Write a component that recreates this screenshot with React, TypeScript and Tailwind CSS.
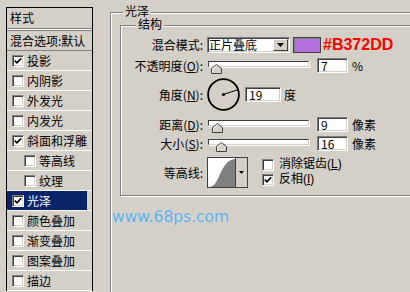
import React from 'react';

const sunken =
  'border border-[#808080] border-r-white border-b-white shadow-[inset_1px_1px_0_#404040,inset_-1px_-1px_0_#D4D0C8]';
const etched = 'border border-[#808080] shadow-[inset_1px_1px_0_#fff,1px_1px_0_#fff]';
const tight = "font-['Liberation_Sans','Noto_Sans_CJK_SC',sans-serif]";

function Check({ checked }: { checked?: boolean }) {
  return (
    <span className={`inline-flex w-[12px] h-[12px] shrink-0 items-center justify-center bg-white ${sunken}`}>
      {checked && (
        <svg width="8" height="8" viewBox="0 0 8 8">
          <polyline points="0.8,3.6 3,5.8 7.2,1.2" fill="none" stroke="#000" strokeWidth="1.7" />
        </svg>
      )}
    </span>
  );
}

function Key({ k }: { k: string }) {
  return (
    <>
      (<span className="underline underline-offset-[1px]">{k}</span>):
    </>
  );
}

function Slider({ pos }: { pos: number }) {
  return (
    <div className="relative ml-[5px] w-[101px] h-[15px]">
      <div className="mt-[3px] h-[6px] bg-white border border-[#404040] border-r-[#D4D0C8] border-b-[#D4D0C8] shadow-[1px_1px_0_#fff]" />
      <svg className="absolute top-[6px]" style={{ left: pos }} width="11" height="10" viewBox="0 0 11 10">
        <path d="M0.5 9.5 V4.5 L5.5 0.5 L10.5 4.5 V9.5 Z" fill="#D4D0C8" stroke="#404040" />
        <path d="M1.5 8.5 V5 L5.5 1.8" fill="none" stroke="#fff" />
      </svg>
    </div>
  );
}

function NumBox({ value, w = 'w-[31px]', ml = 'ml-[8px]' }: { value: string; w?: string; ml?: string }) {
  return (
    <div className={`${ml} ${w} h-[15px] bg-white pl-[3px] leading-[13px] ${sunken}`}>{value}</div>
  );
}

const items = [
  { t: '投影', c: true },
  { t: '内阴影' },
  { t: '外发光' },
  { t: '内发光' },
  { t: '斜面和浮雕', c: true },
  { t: '等高线', indent: true },
  { t: '纹理', indent: true },
  { t: '光泽', c: true, sel: true },
  { t: '颜色叠加' },
  { t: '渐变叠加' },
  { t: '图案叠加' },
  { t: '描边' },
];

export default function App() {
  return (
    <div className="flex items-start w-[410px] h-[292px] overflow-hidden bg-[#D4D0C8] text-black text-[12px] leading-[14px] font-['Noto_Sans_CJK_SC',sans-serif]">
      {/* style list */}
      <div className="ml-[6px] mt-[7px] w-[87px] shrink-0 border-t border-l border-r border-black">
        <div className="h-[20px] flex items-center pl-[3px]">样式</div>
        <div className="h-[3px] border-t border-b border-[#808080] bg-white" />
        <div className="h-[20px] flex items-center pl-[3px] border-b border-[#808080]">混合选项:默认</div>
        {items.map((it) => (
          <div
            key={it.t}
            className={`h-[20px] flex items-center border-b border-white ${it.indent ? 'pl-[17px]' : 'pl-[5px]'} ${
              it.sel ? 'text-white' : ''
            }`}
          >
            <div className={`flex items-center h-[19px] w-full ${it.sel ? 'bg-[#0A246A] -ml-[5px] pl-[5px]' : ''}`}>
              <Check checked={it.c} />
              <span className="ml-[3px]">{it.t}</span>
            </div>
          </div>
        ))}
      </div>

      {/* 光泽 group */}
      <div className={`ml-[17px] mt-[12px] w-[320px] h-[300px] shrink-0 ${etched}`}>
        <div className={`-mt-[7px] ml-[12px] px-[2px] w-fit bg-[#D4D0C8] leading-[12px] ${tight}`}>光泽</div>

        <div className={`ml-[9px] mt-[7px] w-[320px] pb-[7px] ${etched}`}>
          <div className={`-mt-[7px] ml-[15px] px-[2px] w-fit bg-[#D4D0C8] leading-[12px] ${tight}`}>结构</div>

          <div className="mt-[6px] flex items-center h-[16px]">
            <div className="w-[82px] text-right">混合模式:</div>
            <div className={`ml-[4px] w-[83px] h-[16px] flex bg-white ${sunken}`}>
              <span className="flex-1 pl-[1px] leading-[14px]">正片叠底</span>
              <span className="mt-[1px] mr-[1px] w-[15px] h-[12px] flex items-center justify-center bg-[#D4D0C8] border border-white border-r-[#404040] border-b-[#404040]">
                <svg width="7" height="4" viewBox="0 0 7 4">
                  <path d="M0 0 H7 L3.5 4 Z" fill="#000" />
                </svg>
              </span>
            </div>
            <div className="ml-[3px] w-[28px] h-[16px] border border-[#404040] bg-[#B372DD] shadow-[inset_1px_1px_0_#808080]" />
            <div className="ml-[2px] text-[16px] leading-[16px] font-bold text-[#FF0000] font-['Liberation_Sans',Arial,sans-serif]">
              #B372DD
            </div>
          </div>

          <div className="mt-[5px] flex items-center h-[15px]">
            <div className="w-[82px] text-right">
              不透明度<Key k="O" />
            </div>
            <Slider pos={3} />
            <NumBox value="7" />
            <span className="ml-[4px]">%</span>
          </div>

          <div className="mt-[5px] flex items-center h-[33px]">
            <div className="w-[82px] text-right">
              角度<Key k="N" />
            </div>
            <svg className="ml-[4px]" width="33" height="33" viewBox="0 0 33 33">
              <circle cx="16.5" cy="16.5" r="15.4" fill="none" stroke="#000" strokeWidth="1.8" />
              <line x1="16.5" y1="16.5" x2="31" y2="11.6" stroke="#000" strokeWidth="1" />
              <circle cx="16.5" cy="16.5" r="1.6" fill="#000" />
            </svg>
            <NumBox value="19" w="w-[36px]" ml="ml-[5px]" />
            <span className="ml-[3px]">度</span>
          </div>

          <div className="mt-[6px] flex items-center h-[15px]">
            <div className="w-[82px] text-right">
              距离<Key k="D" />
            </div>
            <Slider pos={4} />
            <NumBox value="9" />
            <span className="ml-[4px]">像素</span>
          </div>

          <div className="mt-[4px] flex items-center h-[15px]">
            <div className="w-[82px] text-right">
              大小<Key k="S" />
            </div>
            <Slider pos={8} />
            <NumBox value="16" />
            <span className="ml-[4px]">像素</span>
          </div>

          <div className="mt-[6px] flex items-center h-[31px]">
            <div className="w-[82px] text-right">等高线:</div>
            <div className="ml-[4px] w-[41px] h-[31px] flex border border-[#404040] bg-white">
              <svg width="27" height="29" viewBox="0 0 27 29">
                <path d="M2 29 C12 28, 12 2, 27 1 V29 Z" fill="#808080" />
              </svg>
              <div className="flex-1 flex items-center justify-center bg-[#D4D0C8] border-l border-[#404040]">
                <svg width="5" height="3" viewBox="0 0 5 3">
                  <path d="M0 0 H5 L2.5 3 Z" fill="#000" />
                </svg>
              </div>
            </div>
            <div className={`ml-[14px] flex flex-col self-start ${tight}`}>
              <div className="h-[15px] flex items-center">
                <Check />
                <span className="ml-[5px] leading-[13px]">
                  消除锯齿(<span className="underline underline-offset-[1px]">L</span>)
                </span>
              </div>
              <div className="h-[15px] flex items-center">
                <Check checked />
                <span className="ml-[5px] leading-[13px]">
                  反相(<span className="underline underline-offset-[1px]">I</span>)
                </span>
              </div>
            </div>
          </div>
        </div>

        <div className="mt-[12px] pl-[1px] text-[15.5px] leading-[18px] text-[#63AFE5] font-['DejaVu_Sans',sans-serif] [text-shadow:0_0_2px_#cfe6f5]">
          www.68ps.com
        </div>
      </div>
    </div>
  );
}
